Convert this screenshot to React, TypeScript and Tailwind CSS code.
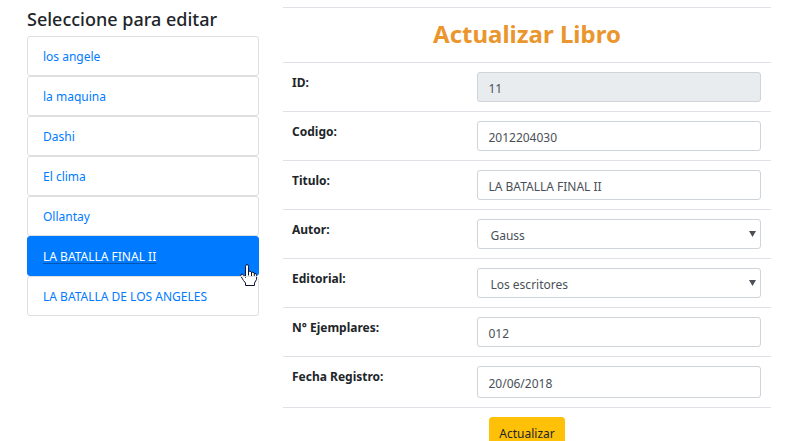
import { useState } from "react";
import type { ReactNode } from "react";

const books = [
  "los angele",
  "la maquina",
  "Dashi",
  "El clima",
  "Ollantay",
  "LA BATALLA FINAL II",
  "LA BATALLA DE LOS ANGELES",
];

const fieldClass =
  "block w-full rounded-[3px] border border-[#ced4da] bg-white pr-[10px] pt-[3px] text-[12px] leading-5 text-[#495057] outline-none";

function HandPointer() {
  return (
    <svg
      className="pointer-events-none absolute top-[27px] right-0 h-[23px] w-[18px]"
      viewBox="0 0 18 23"
      aria-hidden="true"
    >
      <path
        d="M5.5 13.5V2.5Q5.5 .5 7 .5T8.5 2.5V7.5Q10 6 11.5 8.5Q13.3 7 14.3 9.5Q16.5 8.5 16.5 11.5V15.5L14.5 19V21.5H5.5V19L3.5 16.5L.7 12Q.7 10 2 10Q3.2 10 5.5 13.5Z"
        fill="#fff"
        stroke="#0b1530"
        strokeLinejoin="round"
      />
      <path d="M8.5 7V11.5M11.5 8V12M14.3 9V12.5" fill="none" stroke="#0b1530" />
    </svg>
  );
}

function Row({ id, label, children }: { id: string; label: string; children: ReactNode }) {
  return (
    <tr className="border-t border-[#dee2e6]">
      <th scope="row" className="px-[9px] pt-[10px] text-left align-top leading-5 font-bold">
        <label htmlFor={id}>{label}</label>
      </th>
      <td className="py-[9px] pr-[10px] pl-[9px] align-top">{children}</td>
    </tr>
  );
}

function TextField({
  id,
  value,
  readOnly,
  tall,
}: {
  id: string;
  value: string;
  readOnly?: boolean;
  tall?: boolean;
}) {
  return (
    <input
      id={id}
      type="text"
      defaultValue={value}
      readOnly={readOnly}
      className={`${fieldClass} pl-[10px] ${tall ? "h-8" : "h-[30px]"} read-only:bg-[#e9ecef]`}
    />
  );
}

function SelectField({ id, value }: { id: string; value: string }) {
  return (
    <div className="relative">
      <select
        id={id}
        defaultValue={value}
        className={`${fieldClass} h-[30px] appearance-none pl-3`}
      >
        <option>{value}</option>
      </select>
      <svg
        className="pointer-events-none absolute top-3 right-[5px] h-[6px] w-[7px]"
        viewBox="0 0 7 6"
        aria-hidden="true"
      >
        <path d="M0 0H7L3.5 6Z" fill="#495057" />
      </svg>
    </div>
  );
}

export default function App() {
  const [selected, setSelected] = useState(5);

  return (
    <div className="grid grid-cols-[29fr_61fr] gap-6 bg-white pt-[7px] pr-[37px] pl-[27px] font-['Noto_Sans',sans-serif] text-[12px] leading-5 text-[#212529]">
      <aside>
        <h2 className="mb-1 text-[18px] leading-[25px] font-medium">Seleccione para editar</h2>
        <ul>
          {books.map((book, i) => (
            <li
              key={book}
              className={`relative rounded-[3px] border ${
                i === selected ? "border-[#007bff] bg-[#007bff]" : "border-[#dfdfdf]"
              }`}
            >
              <a
                href="#"
                onClick={(e) => {
                  e.preventDefault();
                  setSelected(i);
                }}
                className={`block px-[15px] pt-[10px] pb-2 ${
                  i === selected
                    ? "text-white underline decoration-[#0056b3] decoration-1 underline-offset-2"
                    : "text-[#007bff] hover:underline"
                }`}
              >
                {book}
              </a>
              {i === selected && <HandPointer />}
            </li>
          ))}
        </ul>
      </aside>

      <form onSubmit={(e) => e.preventDefault()}>
        <table className="w-full table-fixed border-collapse">
          <colgroup>
            <col className="w-[38%]" />
            <col />
          </colgroup>
          <tbody>
            <tr className="border-t border-[#dee2e6]">
              <th colSpan={2} className="pt-2 pb-[10px]">
                <h1 className="text-center text-[24px] leading-9 font-bold text-[#eb952d]">
                  Actualizar Libro
                </h1>
              </th>
            </tr>
            <Row id="id" label="ID:">
              <TextField id="id" value="11" readOnly />
            </Row>
            <Row id="codigo" label="Codigo:">
              <TextField id="codigo" value="2012204030" />
            </Row>
            <Row id="titulo" label="Titulo:">
              <TextField id="titulo" value="LA BATALLA FINAL II" />
            </Row>
            <Row id="autor" label="Autor:">
              <SelectField id="autor" value="Gauss" />
            </Row>
            <Row id="editorial" label="Editorial:">
              <SelectField id="editorial" value="Los escritores" />
            </Row>
            <Row id="ejemplares" label="N° Ejemplares:">
              <TextField id="ejemplares" value="012" />
            </Row>
            <Row id="fecha" label="Fecha Registro:">
              <TextField id="fecha" value="20/06/2018" tall />
            </Row>
            <tr className="border-t border-[#dee2e6]">
              <td colSpan={2} className="pt-[9px] text-center">
                <button
                  type="submit"
                  className="rounded-[3px] border border-[#ffc107] bg-[#ffc107] px-[9px] pt-[6px] pb-1"
                >
                  Actualizar
                </button>
              </td>
            </tr>
          </tbody>
        </table>
      </form>
    </div>
  );
}
